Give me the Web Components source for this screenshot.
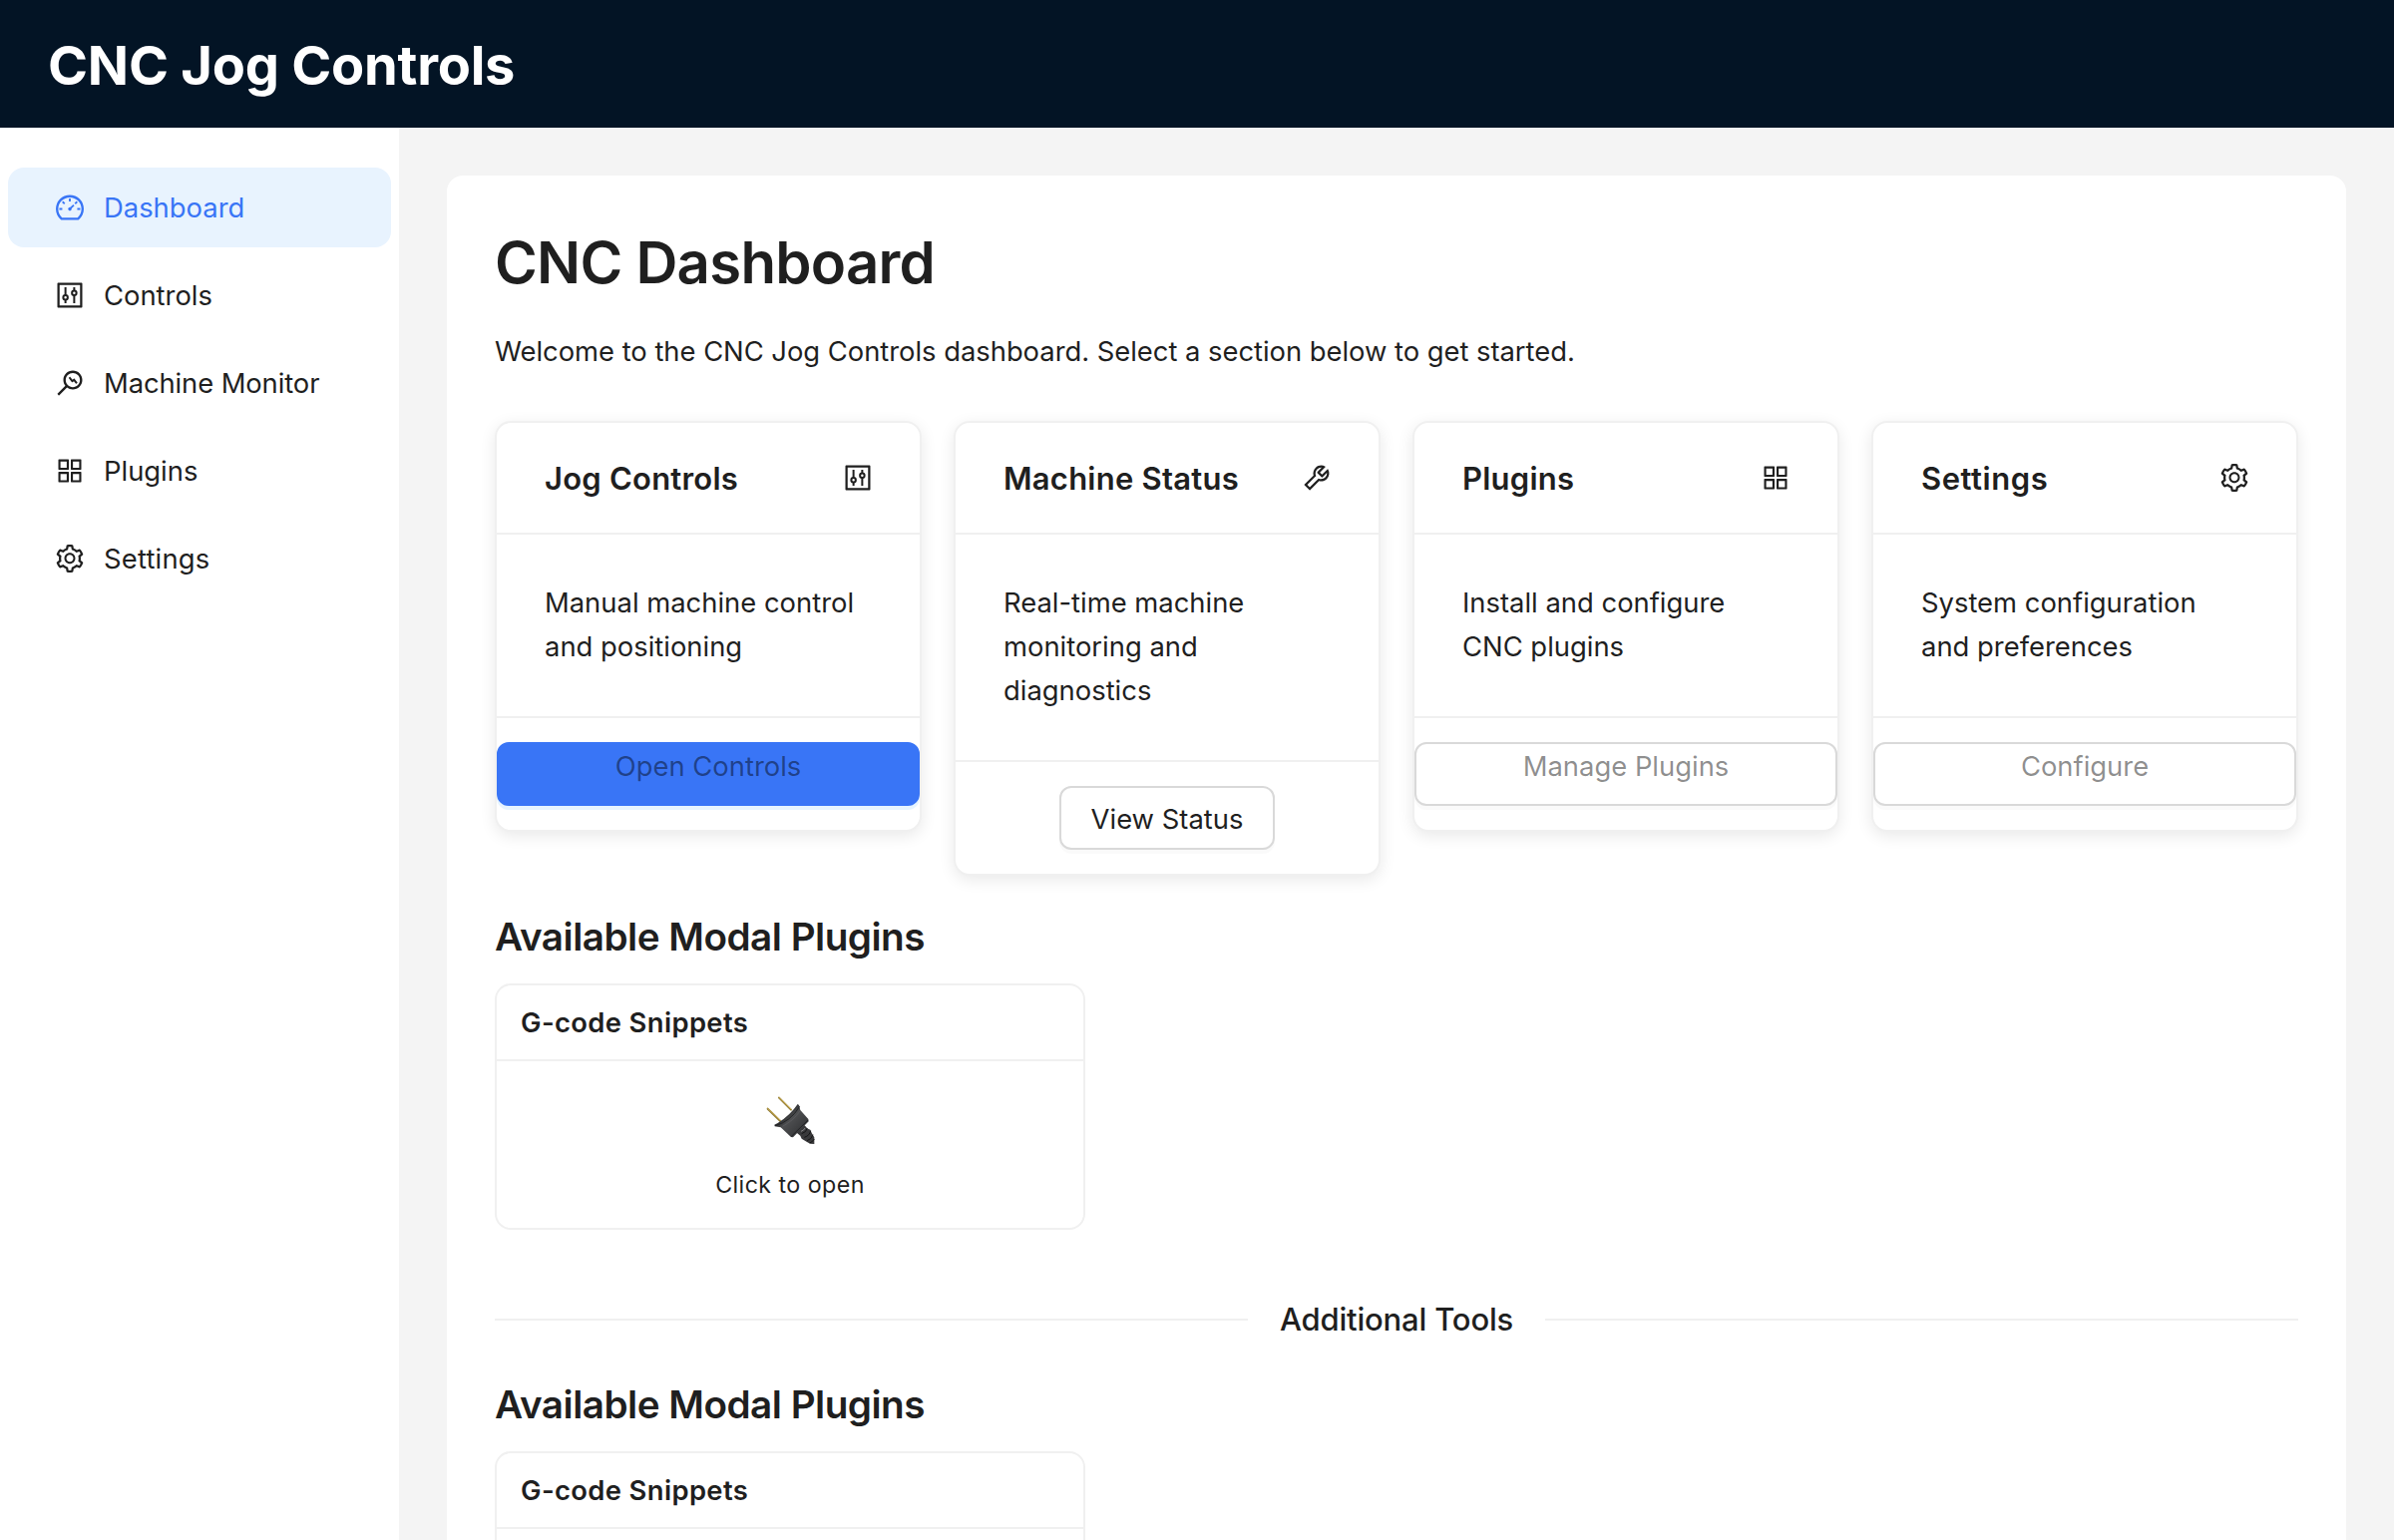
<!DOCTYPE html>
<html lang="en">
<head>
<meta charset="utf-8">
<title>CNC Jog Controls</title>
<style>
  html, body { margin: 0; height: 100%; }
  body {
    font-family: Inter, "Liberation Sans", sans-serif;
    font-size: 27.4px;
    line-height: 44px;
    color: #1f1f1f;
    background: #f4f4f4;
    overflow: hidden;
    --line: #f0f0f0;
    --primary: #3975f6;
  }
</style>
</head>
<body>
<cnc-app>
  <cnc-header slot="header">CNC Jog Controls</cnc-header>
  <nav-menu slot="side">
    <nav-item icon="dashboard" selected>Dashboard</nav-item>
    <nav-item icon="control">Controls</nav-item>
    <nav-item icon="monitor" style="letter-spacing:-.1px">Machine Monitor</nav-item>
    <nav-item icon="appstore">Plugins</nav-item>
    <nav-item icon="setting" style="letter-spacing:.2px">Settings</nav-item>
  </nav-menu>
  <page-intro heading="CNC Dashboard">Welcome to the CNC Jog Controls dashboard. Select a section below to get started.</page-intro>
  <card-row>
    <section-card heading="Jog Controls" icon="control">Manual machine control and positioning
      <ui-button slot="action" variant="primary" block>Open Controls</ui-button></section-card>
    <section-card heading="Machine Status" icon="tool">Real-time machine monitoring and diagnostics
      <ui-button slot="action">View Status</ui-button></section-card>
    <section-card heading="Plugins" icon="appstore">Install and configure CNC plugins
      <ui-button slot="action" block>Manage Plugins</ui-button></section-card>
    <section-card heading="Settings" icon="setting" style="--title-spacing:.55px">System configuration and preferences
      <ui-button slot="action" block>Configure</ui-button></section-card>
  </card-row>
  <plugin-section heading="Available Modal Plugins" style="padding-top:32px">
    <plugin-card heading="G-code Snippets">Click to open</plugin-card>
  </plugin-section>
  <text-divider>Additional Tools</text-divider>
  <plugin-section heading="Available Modal Plugins">
    <plugin-card heading="G-code Snippets"></plugin-card>
  </plugin-section>
</cnc-app>

<script>
const ICONS = {
  dashboard: '<path d="M924.8 385.6a446.7 446.7 0 00-96-142.4 446.7 446.7 0 00-142.4-96C631.1 123.8 572.5 112 512 112s-119.1 11.8-174.4 35.2a446.7 446.7 0 00-142.4 96 446.7 446.7 0 00-96 142.4C75.8 440.9 64 499.5 64 560c0 132.7 58.3 257.7 159.9 343.1l1.7 1.4c5.8 4.8 13.1 7.5 20.6 7.5h531.7c7.5 0 14.8-2.7 20.6-7.5l1.7-1.4C901.7 817.7 960 692.7 960 560c0-60.5-11.9-119.1-35.2-174.4zM761.4 836H262.6A371.12 371.12 0 01140 560c0-99.4 38.7-192.8 109-263 70.3-70.3 163.7-109 263-109 99.4 0 192.8 38.7 263 109 70.3 70.3 109 163.7 109 263 0 105.6-44.5 205.5-122.6 276zM623.5 421.5a8.03 8.03 0 00-11.3 0L527.7 506c-18.7-5-39.4-.2-54.1 14.5a55.95 55.95 0 000 79.2 55.95 55.95 0 0079.2 0 55.87 55.87 0 0014.5-54.1l84.5-84.5c3.1-3.1 3.1-8.2 0-11.3l-28.3-28.3zM490 320h44c4.4 0 8-3.6 8-8v-80c0-4.4-3.6-8-8-8h-44c-4.4 0-8 3.6-8 8v80c0 4.4 3.6 8 8 8zm260 218v44c0 4.4 3.6 8 8 8h80c4.4 0 8-3.6 8-8v-44c0-4.4-3.6-8-8-8h-80c-4.4 0-8 3.6-8 8zm12.7-197.2l-31.1-31.1a8.03 8.03 0 00-11.3 0l-56.6 56.6a8.03 8.03 0 000 11.3l31.1 31.1c3.1 3.1 8.2 3.1 11.3 0l56.6-56.6c3.1-3.1 3.1-8.2 0-11.3zm-458.6-31.1a8.03 8.03 0 00-11.3 0l-31.1 31.1a8.03 8.03 0 000 11.3l56.6 56.6c3.1 3.1 8.2 3.1 11.3 0l31.1-31.1c3.1-3.1 3.1-8.2 0-11.3l-56.6-56.6zM262 530h-80c-4.4 0-8 3.6-8 8v44c0 4.4 3.6 8 8 8h80c4.4 0 8-3.6 8-8v-44c0-4.4-3.6-8-8-8z"/>',
  control: '<path d="M880 112H144c-17.7 0-32 14.3-32 32v736c0 17.7 14.3 32 32 32h736c17.7 0 32-14.3 32-32V144c0-17.7-14.3-32-32-32zm-40 728H184V184h656v656z"/><g fill="none" stroke="currentColor" stroke-width="64"><path d="M372 256v256M372 660v108M652 256v108M652 512v256"/><circle cx="372" cy="584" r="72"/><circle cx="652" cy="440" r="72"/></g>',
  appstore: '<path d="M464 144H160c-8.8 0-16 7.2-16 16v304c0 8.8 7.2 16 16 16h304c8.8 0 16-7.2 16-16V160c0-8.8-7.2-16-16-16zm-52 268H212V212h200v200zm452-268H560c-8.8 0-16 7.2-16 16v304c0 8.8 7.2 16 16 16h304c8.8 0 16-7.2 16-16V160c0-8.8-7.2-16-16-16zm-52 268H612V212h200v200zM464 544H160c-8.8 0-16 7.2-16 16v304c0 8.8 7.2 16 16 16h304c8.8 0 16-7.2 16-16V560c0-8.8-7.2-16-16-16zm-52 268H212V612h200v200zm452-268H560c-8.8 0-16 7.2-16 16v304c0 8.8 7.2 16 16 16h304c8.8 0 16-7.2 16-16V560c0-8.8-7.2-16-16-16zm-52 268H612V612h200v200z"/>',
  setting: '<path d="M924.8 625.7l-65.5-56c3.1-19 4.7-38.4 4.7-57.8s-1.6-38.8-4.7-57.8l65.5-56a32.03 32.03 0 009.3-35.2l-.9-2.6a443.74 443.74 0 00-79.7-137.9l-1.8-2.1a32.12 32.12 0 00-35.1-9.5l-81.3 28.9c-30-24.6-63.5-44-99.7-57.6l-15.7-85a32.05 32.05 0 00-25.8-25.7l-2.7-.5c-52.1-9.4-106.9-9.4-159 0l-2.7.5a32.05 32.05 0 00-25.8 25.7l-15.8 85.4a351.86 351.86 0 00-99 57.4l-81.9-29.1a32 32 0 00-35.1 9.5l-1.8 2.1a446.02 446.02 0 00-79.7 137.9l-.9 2.6c-4.5 12.5-.8 26.5 9.3 35.2l66.3 56.6c-3.1 18.8-4.6 38-4.6 57.1 0 19.2 1.5 38.4 4.6 57.1L99 625.5a32.03 32.03 0 00-9.3 35.2l.9 2.6c18.1 50.4 44.9 96.9 79.7 137.9l1.8 2.1a32.12 32.12 0 0035.1 9.5l81.9-29.1c29.8 24.5 63.1 43.9 99 57.4l15.8 85.4a32.05 32.05 0 0025.8 25.7l2.7.5a449.4 449.4 0 00159 0l2.7-.5a32.05 32.05 0 0025.8-25.7l15.7-85a350 350 0 0099.7-57.6l81.3 28.9a32 32 0 0035.1-9.5l1.8-2.1c34.8-41.1 61.6-87.5 79.7-137.9l.9-2.6c4.5-12.3.8-26.3-9.3-35zM788.3 465.9c2.5 15.1 3.8 30.6 3.8 46.1s-1.3 31-3.8 46.1l-6.6 40.1 74.7 63.9a370.03 370.03 0 01-42.6 73.6L721 702.8l-31.4 25.8c-23.9 19.6-50.5 35-79.3 45.8l-38.1 14.3-17.9 97a377.5 377.5 0 01-85 0l-17.9-97.2-37.8-14.5c-28.5-10.8-55-26.2-78.7-45.7l-31.4-25.9-93.4 33.2c-17-22.9-31.2-47.6-42.6-73.6l75.5-64.5-6.5-40c-2.4-14.9-3.7-30.3-3.7-45.5 0-15.3 1.2-30.6 3.7-45.5l6.5-40-75.5-64.5c11.3-26.1 25.6-50.7 42.6-73.6l93.4 33.2 31.4-25.9c23.7-19.5 50.2-34.9 78.7-45.7l37.9-14.3 17.9-97.2c28.1-3.2 56.8-3.2 85 0l17.9 97 38.1 14.3c28.7 10.8 55.4 26.2 79.3 45.8l31.4 25.8 92.8-32.9c17 22.9 31.2 47.6 42.6 73.6L781.8 426l6.5 39.9zM512 326c-97.2 0-176 78.8-176 176s78.8 176 176 176 176-78.8 176-176-78.8-176-176-176zm79.2 255.2A111.6 111.6 0 01512 614c-29.9 0-58-11.7-79.2-32.8A111.6 111.6 0 01400 502c0-29.9 11.7-58 32.8-79.2C454 401.6 482.1 390 512 390c29.9 0 58 11.6 79.2 32.8A111.6 111.6 0 01624 502c0 29.9-11.7 58-32.8 79.2z"/>',
  tool: '<path d="M876.6 239.5c-.5-.9-1.2-1.8-2-2.5-5-5-13.1-5-18.1 0L684.2 409.3l-67.9-67.9L788.7 169c.8-.8 1.4-1.6 2-2.5 3.6-6.1 1.6-13.9-4.5-17.5-98.2-58-226.8-44.7-311.3 39.7-67 67-89.2 162-66.5 247.4l-293 293c-3 3-2.8 7.9.3 11l169.7 169.7c3.1 3.1 8.1 3.3 11 .3l292.9-292.9c85.5 22.8 180.5.7 247.6-66.4 84.4-84.5 97.7-213.1 39.7-311.3zM786 499.8c-58.1 58.1-145.3 69.3-214.6 33.6l-8.8 8.8-.1-.1-274 274.1-79.2-79.2 230.1-230.1s0 .1.1.1l52.8-52.8c-35.7-69.3-24.5-156.5 33.6-214.6a184.2 184.2 0 01144-53.5L537 318.9a32.05 32.05 0 000 45.3l124.5 124.5a32.05 32.05 0 0045.3 0l132.8-132.8c3.7 51.8-14.4 104.8-53.6 143.9z"/>',
  monitor: '<path d="M692.8 412.7l.2-.2-34.6-44.3a7.97 7.97 0 00-11.2-1.4l-50.4 39.3-70.5-90.1a7.97 7.97 0 00-11.2-1.4l-37.9 29.7a7.97 7.97 0 00-1.4 11.2l70.5 90.2-.2.1 34.6 44.3c2.7 3.5 7.7 4.1 11.2 1.4l50.4-39.3 64.1 82c2.7 3.5 7.7 4.1 11.2 1.4l37.9-29.6c3.5-2.7 4.1-7.7 1.4-11.2l-64.1-82.1zM608 112c-167.9 0-304 136.1-304 304 0 70.3 23.9 135 63.9 186.5L114.3 856.1a8.03 8.03 0 000 11.3l42.3 42.3c3.1 3.1 8.2 3.1 11.3 0l253.6-253.6c51.5 40 116.2 63.9 186.5 63.9 167.9 0 304-136.1 304-304S775.9 112 608 112zm161.2 465.2C726.2 620.3 668.9 644 608 644s-118.2-23.7-161.2-66.8C403.7 534.2 380 476.9 380 416s23.7-118.2 66.8-161.2c43-43.1 100.3-66.8 161.2-66.8s118.2 23.7 161.2 66.8c43.1 43 66.8 100.3 66.8 161.2s-23.7 118.2-66.8 161.2z"/>'
};

function define(name, render) {
  customElements.define(name, class extends HTMLElement {
    connectedCallback() {
      if (this.shadowRoot) return;
      this.attachShadow({ mode: 'open' }).innerHTML = render(this);
    }
  });
}
const attr = (el, name) => el.getAttribute(name) || '';

define('cnc-icon', el => `
  <style>:host { display: block; flex: none; width: 28px; height: 28px; } svg { display: block; width: 100%; height: 100%; fill: currentColor; }</style>
  <svg viewBox="64 64 896 896" aria-hidden="true">${ICONS[attr(el, 'name')]}</svg>`);

define('cnc-app', () => `
  <style>
    :host { display: flex; flex-direction: column; height: 100vh; overflow: hidden; }
    .body { flex: 1; min-height: 0; display: flex; }
    aside { width: 400px; flex: none; background: #fff; }
    main { flex: 1; min-width: 0; padding: 48px 48px 0; overflow: hidden; }
    .panel { box-sizing: border-box; background: #fff; border-radius: 16px; padding: 48px; }
  </style>
  <slot name="header"></slot>
  <div class="body">
    <aside><slot name="side"></slot></aside>
    <main><div class="panel"><slot></slot></div></main>
  </div>`);

define('cnc-header', () => `
  <style>
    :host { display: flex; align-items: center; flex: none; box-sizing: border-box; height: 128px; padding: 2px 48px 0; background: #031425; color: #fff; }
    h1 { margin: 0; font-size: 54.2px; font-weight: 700; line-height: 68px; letter-spacing: -.25px; }
  </style>
  <h1><slot></slot></h1>`);

define('nav-menu', () => `
  <style>:host { display: flex; flex-direction: column; gap: 8px; padding: 40px 8px; }</style>
  <slot></slot>`);

define('nav-item', el => `
  <style>
    :host { display: flex; align-items: center; gap: 20px; box-sizing: border-box; height: 80px; padding: 0 48px; border-radius: 16px; }
    :host([selected]) { background: #e8f3fe; color: var(--primary); }
  </style>
  <cnc-icon name="${attr(el, 'icon')}"></cnc-icon><span><slot></slot></span>`);

define('page-intro', el => `
  <style>
    :host { display: block; }
    h2 { margin: 0 0 29px; padding-top: 1px; font-size: 58.1px; font-weight: 600; line-height: 76px; letter-spacing: -.74px; }
    p { margin: 0 0 48px; letter-spacing: -.03px; }
  </style>
  <h2>${attr(el, 'heading')}</h2><p><slot></slot></p>`);

define('card-row', () => `
  <style>:host { display: grid; grid-template-columns: repeat(4, 1fr); gap: 32px; align-items: start; }</style>
  <slot></slot>`);

define('section-card', el => `
  <style>
    :host { display: block; border: 2px solid var(--line); border-radius: 16px; background: #fff; box-shadow: 0 4px 16px rgba(0,0,0,.09); }
    header { display: flex; align-items: center; justify-content: space-between; box-sizing: border-box; height: 112px; padding: 0 48px; border-bottom: 2px solid var(--line); }
    h3 { margin: 0; padding-top: 1px; font-size: 31px; font-weight: 600; line-height: 48px; letter-spacing: var(--title-spacing, .23px); }
    .text { padding: 46px 48px 48px; }
    footer { display: flex; justify-content: center; padding: 24px 0; border-top: 2px solid var(--line); }
  </style>
  <header><h3>${attr(el, 'heading')}</h3><cnc-icon name="${attr(el, 'icon')}"></cnc-icon></header>
  <div class="text"><slot></slot></div>
  <footer><slot name="action"></slot></footer>`);

define('ui-button', () => `
  <style>
    :host { display: block; box-sizing: border-box; height: 64px; padding: 9px 30px 7px; border: 2px solid #d9d9d9; border-radius: 12px; background: #fff; box-shadow: 0 4px 0 rgba(0,0,0,.02); text-align: center; white-space: nowrap; }
    :host([block]) { width: 100%; padding: 0; color: rgba(0,0,0,.45); }
    :host([variant=primary]) { background: var(--primary); border-color: var(--primary); box-shadow: 0 4px 0 rgba(5,145,255,.1); }
  </style>
  <slot></slot>`);

define('plugin-section', el => `
  <style>
    :host { display: block; }
    h3 { margin: 0 0 19px; padding-top: 1px; font-size: 38.7px; font-weight: 600; line-height: 56px; letter-spacing: -.52px; }
    .grid { display: grid; grid-template-columns: 592px; }
  </style>
  <h3>${attr(el, 'heading')}</h3><div class="grid"><slot></slot></div>`);

define('plugin-card', el => `
  <style>
    :host { display: block; box-sizing: border-box; height: 247px; border: 2px solid var(--line); border-radius: 16px; background: #fff; }
    header { display: flex; align-items: center; box-sizing: border-box; height: 76px; padding: 0 24px; border-bottom: 2px solid var(--line); font-weight: 600; letter-spacing: .36px; }
    .body { display: flex; flex-direction: column; align-items: center; padding-top: 34px; }
    svg { display: block; width: 50px; height: 50px; }
    p { margin: 20px 0 0; font-size: 23.25px; line-height: 39px; letter-spacing: .43px; }
  </style>
  <header>${attr(el, 'heading')}</header>
  <div class="body">
    <svg viewBox="80 54 150 150" role="img" aria-label="plug">
      <defs>
        <linearGradient id="shell" gradientUnits="userSpaceOnUse" x1="128" y1="98" x2="192" y2="160">
          <stop offset="0" stop-color="#303133"/><stop offset=".25" stop-color="#2f3032"/><stop offset=".45" stop-color="#4d4e50"/><stop offset="1" stop-color="#37383a"/>
        </linearGradient>
      </defs>
      <path d="M88 95l37 36M122 62l36 36" stroke="#8f7a35" stroke-width="6" stroke-linecap="round"/>
      <path d="M88 94l37 35M122 61l36 35" stroke="#d2b458" stroke-width="3" stroke-linecap="round"/>
      <path d="M176 153l18-12 10 9 2 4 10 4 4 9 8 14v20l-12-1-10-5-6-4-10-6-4-9-10-8z" fill="#39393b"/>
      <path d="M190 170q14-4 17-17M198 181q16-5 19-20M206 191q14-4 18-18M214 198q9-3 14-12" fill="none" stroke="#151516" stroke-width="3"/>
      <path d="M188 163q9-3 12-10" fill="none" stroke="#858587" stroke-width="3"/>
      <path d="M178 81l4 3 4 15 24 27 1 7-47 48-6-1-31-29-18-3-1-5 10-5q38-24 60-57z" fill="url(#shell)"/>
      <path d="M110 146q46-12 74-58M159 178l50-49" fill="none" stroke="#222325" stroke-width="3"/>
      <path d="M132 148q32-16 53-46" fill="none" stroke="#5b5c5e" stroke-width="2.5"/>
    </svg>
    <p><slot></slot></p>
  </div>`);

define('text-divider', () => `
  <style>
    :host { display: flex; align-items: center; gap: 32px; padding: 78px 0 44px; font-size: 31px; font-weight: 500; line-height: 48px; height: 24px; letter-spacing: -.18px; }
    :host::before, :host::after { content: ""; flex: 1; height: 2px; background: var(--line); }
    span { white-space: nowrap; }
  </style>
  <span><slot></slot></span>`);
</script>
</body>
</html>
